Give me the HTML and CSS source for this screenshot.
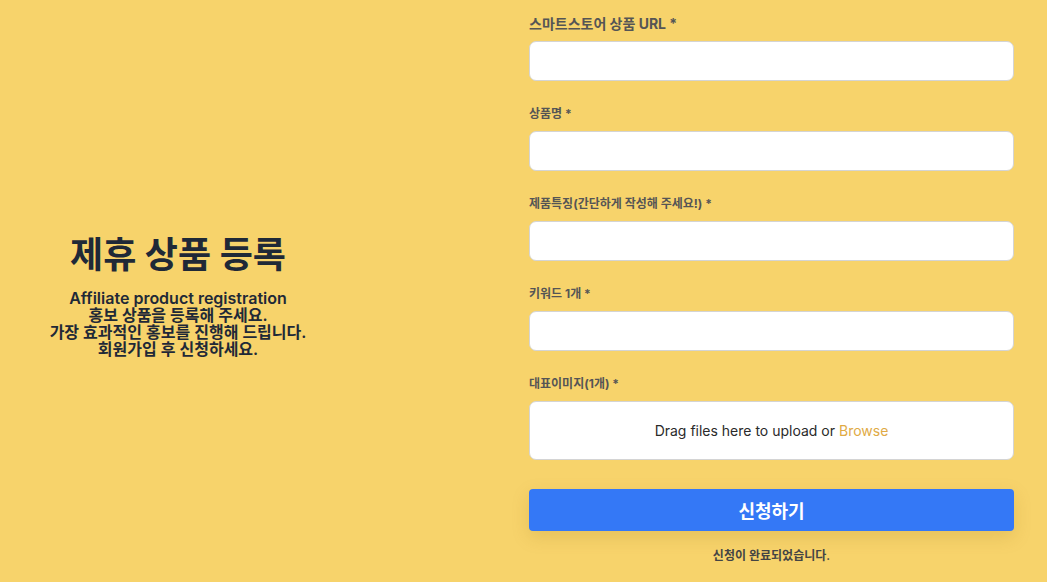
FILE: index.html
```html
<!DOCTYPE html>
<html lang="ko">
<head>
    <meta charset="UTF-8">
    <meta name="viewport" content="width=device-width, initial-scale=1.0">
    <title>제휴 상품 등록</title>
    <link rel="stylesheet" href="styles.css">
</head>
<body>
  <div class="page">
    <div class="intro">
      <h1>제휴 상품 등록</h1>
      <p>Affiliate product registration<br>홍보 상품을 등록해 주세요.<br>가장 효과적인 홍보를 진행해 드립니다.<br>회원가입 후 신청하세요.</p>
    </div>

    <form class="form">
      <div class="field">
        <label class="big">스마트스토어 상품 URL *</label>
        <input type="text" class="input">
      </div>
      <div class="field">
        <label>상품명 *</label>
        <input type="text" class="input">
      </div>
      <div class="field">
        <label>제품특징(간단하게 작성해 주세요!) *</label>
        <input type="text" class="input">
      </div>
      <div class="field">
        <label>키워드 1개 *</label>
        <input type="text" class="input">
      </div>
      <div class="field">
        <label>대표이미지(1개) *</label>
        <div class="drop">Drag files here to upload or <span class="browse">Browse</span></div>
      </div>
      <button type="button" class="submit">신청하기</button>
      <p class="done">신청이 완료되었습니다.</p>
    </form>
  </div>
</body>
</html>
```

FILE: styles.css
```css
*{
  margin: 0;
  padding: 0;
  box-sizing: border-box;
}
body {
  background-color: #f7d36b;
  font-family: Inter, "Noto Sans CJK KR", sans-serif;
  height: 582px;
  overflow: hidden;
}
.page {
  display: flex;
  height: 582px;
}
.intro {
  flex: 0 0 356px;
  display: flex;
  flex-direction: column;
  justify-content: center;
  align-items: center;
  text-align: center;
  color: #1f2937;
  padding-top: 10px;
}
.intro h1 {
  font-size: 36px;
  font-weight: 700;
  line-height: 42px;
  margin-bottom: 14px;
}
.intro p {
  font-size: 16px;
  font-weight: 600;
  line-height: 17px;
}
.form {
  width: 485px;
  margin-left: 173px;
  padding-top: 14px;
}
.field {
  margin-bottom: 23px;
}
.field label {
  display: block;
  font-size: 12px;
  font-weight: 700;
  line-height: 20px;
  color: #555;
  margin-bottom: 7px;
}
.field label.big {
  font-size: 14px;
}
.input {
  display: block;
  width: 100%;
  height: 40px;
  background: #fff;
  border: 1px solid #d4d4d4;
  border-radius: 7px;
  outline: none;
}
.drop {
  height: 59px;
  background: #fff;
  border: 1px solid #d4d4d4;
  border-radius: 7px;
  display: flex;
  justify-content: center;
  align-items: center;
  font-size: 14px;
  color: #2a2a2a;
}
.browse {
  color: #e0aa45;
  margin-left: 4px;
}
.submit {
  display: block;
  width: 100%;
  height: 42px;
  margin-top: 29px;
  border: none;
  border-radius: 4px;
  background: #3478f6;
  color: #fff;
  font-family: inherit;
  font-size: 18px;
  font-weight: 700;
  box-shadow: 0 6px 18px rgba(150, 110, 20, 0.18);
}
.done {
  text-align: center;
  font-size: 12px;
  font-weight: 600;
  color: #444;
  line-height: 20px;
  margin-top: 15px;
}
```
